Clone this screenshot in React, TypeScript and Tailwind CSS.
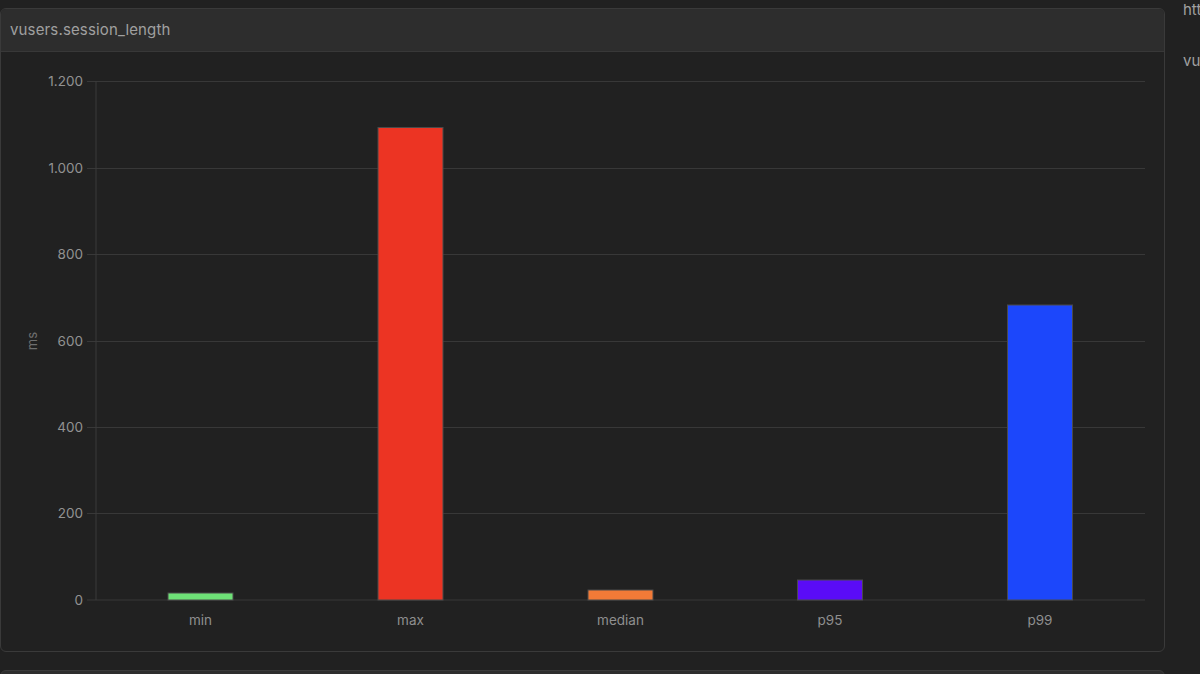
import React from "react"

const ticks = [
  { label: "1.200", y: 81.5 },
  { label: "1.000", y: 168.5 },
  { label: "800", y: 254.5 },
  { label: "600", y: 341.5 },
  { label: "400", y: 427.5 },
  { label: "200", y: 513.5 },
  { label: "0", y: 600 },
]

const bars = [
  { label: "min", x: 168, top: 593, color: "#6ee177" },
  { label: "max", x: 378, top: 127.5, color: "#ec3423" },
  { label: "median", x: 588, top: 590, color: "#f27a37" },
  { label: "p95", x: 797.5, top: 580, color: "#5a0cf7" },
  { label: "p99", x: 1007.5, top: 305, color: "#1c47fb" },
]

const SessionChart = () => {
  return (
    <svg viewBox="1 52 1163 599" className="block w-[1163px] h-[599px]">
      {ticks.map((tick) => (
        <g key={tick.label}>
          <line x1="87" x2="1145" y1={tick.y} y2={tick.y} stroke="#383838" />
          <text x="83" y={tick.y + 4.5} textAnchor="end" fontSize="13.5" fill="#929292">
            {tick.label}
          </text>
        </g>
      ))}
      <line x1="96" x2="96" y1="81" y2="600" stroke="#3a3a3a" />
      <text
        transform="translate(37 341) rotate(-90)"
        textAnchor="middle"
        fontSize="13"
        fill="#6f6f6f"
      >
        ms
      </text>
      {bars.map((bar) => (
        <g key={bar.label}>
          <rect
            x={bar.x}
            y={bar.top}
            width="65"
            height={600 - bar.top}
            fill={bar.color}
            stroke="#4a4a4a"
          />
          <text x={bar.x + 32.5} y="625" textAnchor="middle" fontSize="13.5" fill="#8f8f8f">
            {bar.label}
          </text>
        </g>
      ))}
    </svg>
  )
}

export default function App() {
  return (
    <div className="w-[1200px] h-[674px] overflow-hidden flex gap-[18px] bg-[#212121] font-['Inter',sans-serif]">
      <div className="w-[1165px] shrink-0 pt-2">
        <div className="h-[644px] border border-[#3a3a3a] rounded-md overflow-hidden">
          <div className="h-[43px] flex items-center pt-px pl-[9px] bg-[#2d2d2d] border-b border-[#383838] text-[15px] tracking-[0.15px] text-[#a0a0a0]">
            vusers.session_length
          </div>
          <SessionChart />
        </div>
        <div className="h-10 mt-[18px] border border-[#3a3a3a] rounded-md bg-[#2d2d2d]"></div>
      </div>
      <div className="flex-1 flex flex-col gap-[31px] text-[15px] leading-5 text-[#a0a0a0] whitespace-nowrap">
        <div>http.response_time</div>
        <div>vusers.session_length</div>
      </div>
    </div>
  )
}
